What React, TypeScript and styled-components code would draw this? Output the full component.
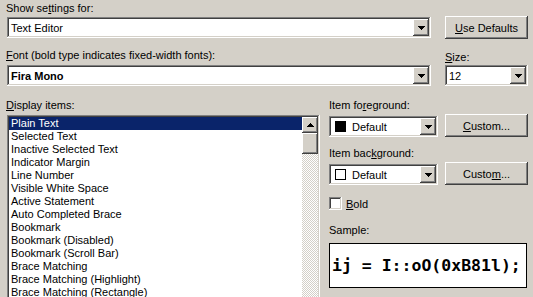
import React from 'react';
import styled, { createGlobalStyle } from 'styled-components';

const Global = createGlobalStyle`
  html, body { margin: 0; padding: 0; background: #d4d0c8; }
  body { font-family: "Liberation Sans", Arial, sans-serif; font-size: 11px; color: #000; }
  * { box-sizing: border-box; }
`;

const raised = `box-shadow: inset -1px -1px #404040, inset 1px 1px #ffffff, inset -2px -2px #808080, inset 2px 2px #d4d0c8;`;
const sunken = `box-shadow: inset -1px -1px #ffffff, inset 1px 1px #808080, inset -2px -2px #d4d0c8, inset 2px 2px #404040;`;

const Dialog = styled.div`
  width: 533px;
  height: 297px;
  overflow: hidden;
  background: #d4d0c8;
  padding-top: 2px;
  display: flex;
  flex-direction: column;
`;

const Label = styled.div<{ $shift?: boolean; $drop?: number }>`
  height: ${(p) => 13 + (p.$drop || 0)}px;
  line-height: 13px;
  padding-top: ${(p) => p.$drop || 0}px;
  white-space: nowrap;
  margin-left: ${(p) => (p.$shift ? -1 : 0)}px;
`;

const Top = styled.div`
  padding-left: 7px;
  display: flex;
  flex-direction: column;
`;

const Row = styled.div<{ $mt: number; $align?: string }>`
  display: flex;
  gap: 14px;
  margin-top: ${(p) => p.$mt}px;
  align-items: ${(p) => p.$align || 'center'};
`;

const Combo = styled.div<{ $w: number; $bold?: boolean }>`
  width: ${(p) => p.$w}px;
  height: 21px;
  ${sunken}
  background: #fff;
  padding: 2px;
  display: flex;
  align-items: center;
  font-weight: ${(p) => (p.$bold ? 'bold' : 'normal')};
`;

const ComboText = styled.div`
  flex: 1;
  padding-left: 2px;
  white-space: nowrap;
  overflow: hidden;
  display: flex;
  align-items: center;
`;

const DropBtn = styled.div`
  width: 16px;
  height: 17px;
  background: #d4d0c8;
  ${raised}
  display: flex;
  align-items: center;
  justify-content: center;
`;

const Button = styled.button<{ $w?: number }>`
  width: ${(p) => p.$w || 83}px;
  height: 23px;
  background: #d4d0c8;
  border: none;
  ${raised}
  font: inherit;
  color: #000;
  padding: 0;
  display: flex;
  align-items: center;
  justify-content: center;
  flex-shrink: 0;
`;

const Bottom = styled.div`
  margin-top: 13px;
  padding-left: 7px;
  display: flex;
  gap: 9px;
`;

const LeftCol = styled.div`
  width: 313px;
  display: flex;
  flex-direction: column;
`;

const RightCol = styled.div`
  width: 199px;
  display: flex;
  flex-direction: column;
`;

const ListBox = styled.div`
  margin-top: 3px;
  height: 190px;
  background: #fff;
  ${sunken}
  padding: 2px;
  display: flex;
`;

const Items = styled.div`
  flex: 1;
  display: flex;
  flex-direction: column;
`;

const Item = styled.div<{ $sel?: boolean }>`
  height: 13px;
  line-height: 13px;
  padding-left: 2px;
  white-space: nowrap;
  background: ${(p) => (p.$sel ? '#0a246a' : 'transparent')};
  color: ${(p) => (p.$sel ? '#fff' : '#000')};
`;

const ScrollBar = styled.div`
  width: 16px;
  display: flex;
  flex-direction: column;
`;

const ScrollBtn = styled.div`
  width: 16px;
  height: 16px;
  background: #d4d0c8;
  ${raised}
  display: flex;
  align-items: center;
  justify-content: center;
`;

const Thumb = styled.div`
  width: 16px;
  height: 21px;
  background: #d4d0c8;
  ${raised}
`;

const Track = styled.div`
  flex: 1;
  background-color: #d4d0c8;
  background-image: conic-gradient(#ffffff 25%, transparent 0 50%, #ffffff 0 75%, transparent 0);
  background-size: 2px 2px;
`;

const ColorRow = styled.div<{ $mt: number }>`
  margin-top: ${(p) => p.$mt}px;
  display: flex;
  align-items: flex-end;
  justify-content: space-between;
  height: 23px;
`;

const Swatch = styled.div<{ $color: string }>`
  width: 11px;
  height: 11px;
  margin-left: 2px;
  margin-right: 6px;
  background: ${(p) => p.$color};
  border: 1px solid #000;
  flex-shrink: 0;
`;

const CheckRow = styled.div`
  margin-top: 12px;
  height: 13px;
  display: flex;
  align-items: center;
  gap: 4px;
`;

const CheckBox = styled.div`
  width: 13px;
  height: 13px;
  background: #fff;
  ${sunken}
`;

const Spacer = styled.div<{ $h: number }>`
  height: ${(p) => p.$h}px;
  flex-shrink: 0;
`;

const SampleBox = styled.div`
  margin-top: 6px;
  width: 198px;
  height: 45px;
  background: #fff;
  border: 1px solid #000;
  display: flex;
  align-items: center;
  padding-left: 2px;
  font-family: "DejaVu Sans Mono", "Liberation Mono", monospace;
  font-weight: bold;
  font-size: 16.5px;
  white-space: pre;
  overflow: hidden;
`;

const Down = () => (
  <svg width="7" height="4" viewBox="0 0 7 4" shapeRendering="crispEdges">
    <path d="M0 0H7V1H6V2H5V3H4V4H3V3H2V2H1V1H0Z" fill="#000" />
  </svg>
);

const Up = () => (
  <svg width="7" height="4" viewBox="0 0 7 4" shapeRendering="crispEdges">
    <path d="M3 0H4V1H5V2H6V3H7V4H0V3H1V2H2V1H3Z" fill="#000" />
  </svg>
);

const items = [
  'Plain Text',
  'Selected Text',
  'Inactive Selected Text',
  'Indicator Margin',
  'Line Number',
  'Visible White Space',
  'Active Statement',
  'Auto Completed Brace',
  'Bookmark',
  'Bookmark (Disabled)',
  'Bookmark (Scroll Bar)',
  'Brace Matching',
  'Brace Matching (Highlight)',
  'Brace Matching (Rectangle)',
  'Breakpoint (Disabled)',
];

export default function App() {
  return (
    <>
      <Global />
      <Dialog>
        <Top>
          <Label $shift>
            Show se<u>t</u>tings for:
          </Label>
          <Row $mt={1}>
            <Combo $w={424}>
              <ComboText>Text Editor</ComboText>
              <DropBtn>
                <Down />
              </DropBtn>
            </Combo>
            <Button>
              <span>
                <u>U</u>se Defaults
              </span>
            </Button>
          </Row>
          <Row $mt={10} $align="flex-start">
            <div style={{ width: 424 }}>
              <Label $shift>
                <u>F</u>ont (bold type indicates fixed-width fonts):
              </Label>
            </div>
            <Label $drop={2}>
              <u>S</u>ize:
            </Label>
          </Row>
          <Row $mt={1}>
            <Combo $w={424} $bold>
              <ComboText>Fira Mono</ComboText>
              <DropBtn>
                <Down />
              </DropBtn>
            </Combo>
            <Combo $w={83}>
              <ComboText>12</ComboText>
              <DropBtn>
                <Down />
              </DropBtn>
            </Combo>
          </Row>
        </Top>
        <Bottom>
          <LeftCol>
            <Label $shift>
              <u>D</u>isplay items:
            </Label>
            <ListBox>
              <Items>
                {items.map((t, i) => (
                  <Item key={t} $sel={i === 0}>
                    {t}
                  </Item>
                ))}
              </Items>
              <ScrollBar>
                <ScrollBtn>
                  <Up />
                </ScrollBtn>
                <Thumb />
                <Track />
              </ScrollBar>
            </ListBox>
          </LeftCol>
          <RightCol>
            <Label>
              Item fo<u>r</u>eground:
            </Label>
            <ColorRow $mt={2}>
              <Combo $w={109}>
                <ComboText>
                  <Swatch $color="#000" />
                  Default
                </ComboText>
                <DropBtn>
                  <Down />
                </DropBtn>
              </Combo>
              <Button>
                <span>
                  <u>C</u>ustom...
                </span>
              </Button>
            </ColorRow>
            <Spacer $h={10} />
            <Label>
              Item bac<u>k</u>ground:
            </Label>
            <ColorRow $mt={2}>
              <Combo $w={109}>
                <ComboText>
                  <Swatch $color="#fff" />
                  Default
                </ComboText>
                <DropBtn>
                  <Down />
                </DropBtn>
              </Combo>
              <Button>
                <span>
                  Custo<u>m</u>...
                </span>
              </Button>
            </ColorRow>
            <CheckRow>
              <CheckBox />
              <span>
                <u>B</u>old
              </span>
            </CheckRow>
            <Spacer $h={14} />
            <Label>Sample:</Label>
            <SampleBox>ij = I::oO(0xB81l);</SampleBox>
          </RightCol>
        </Bottom>
      </Dialog>
    </>
  );
}
